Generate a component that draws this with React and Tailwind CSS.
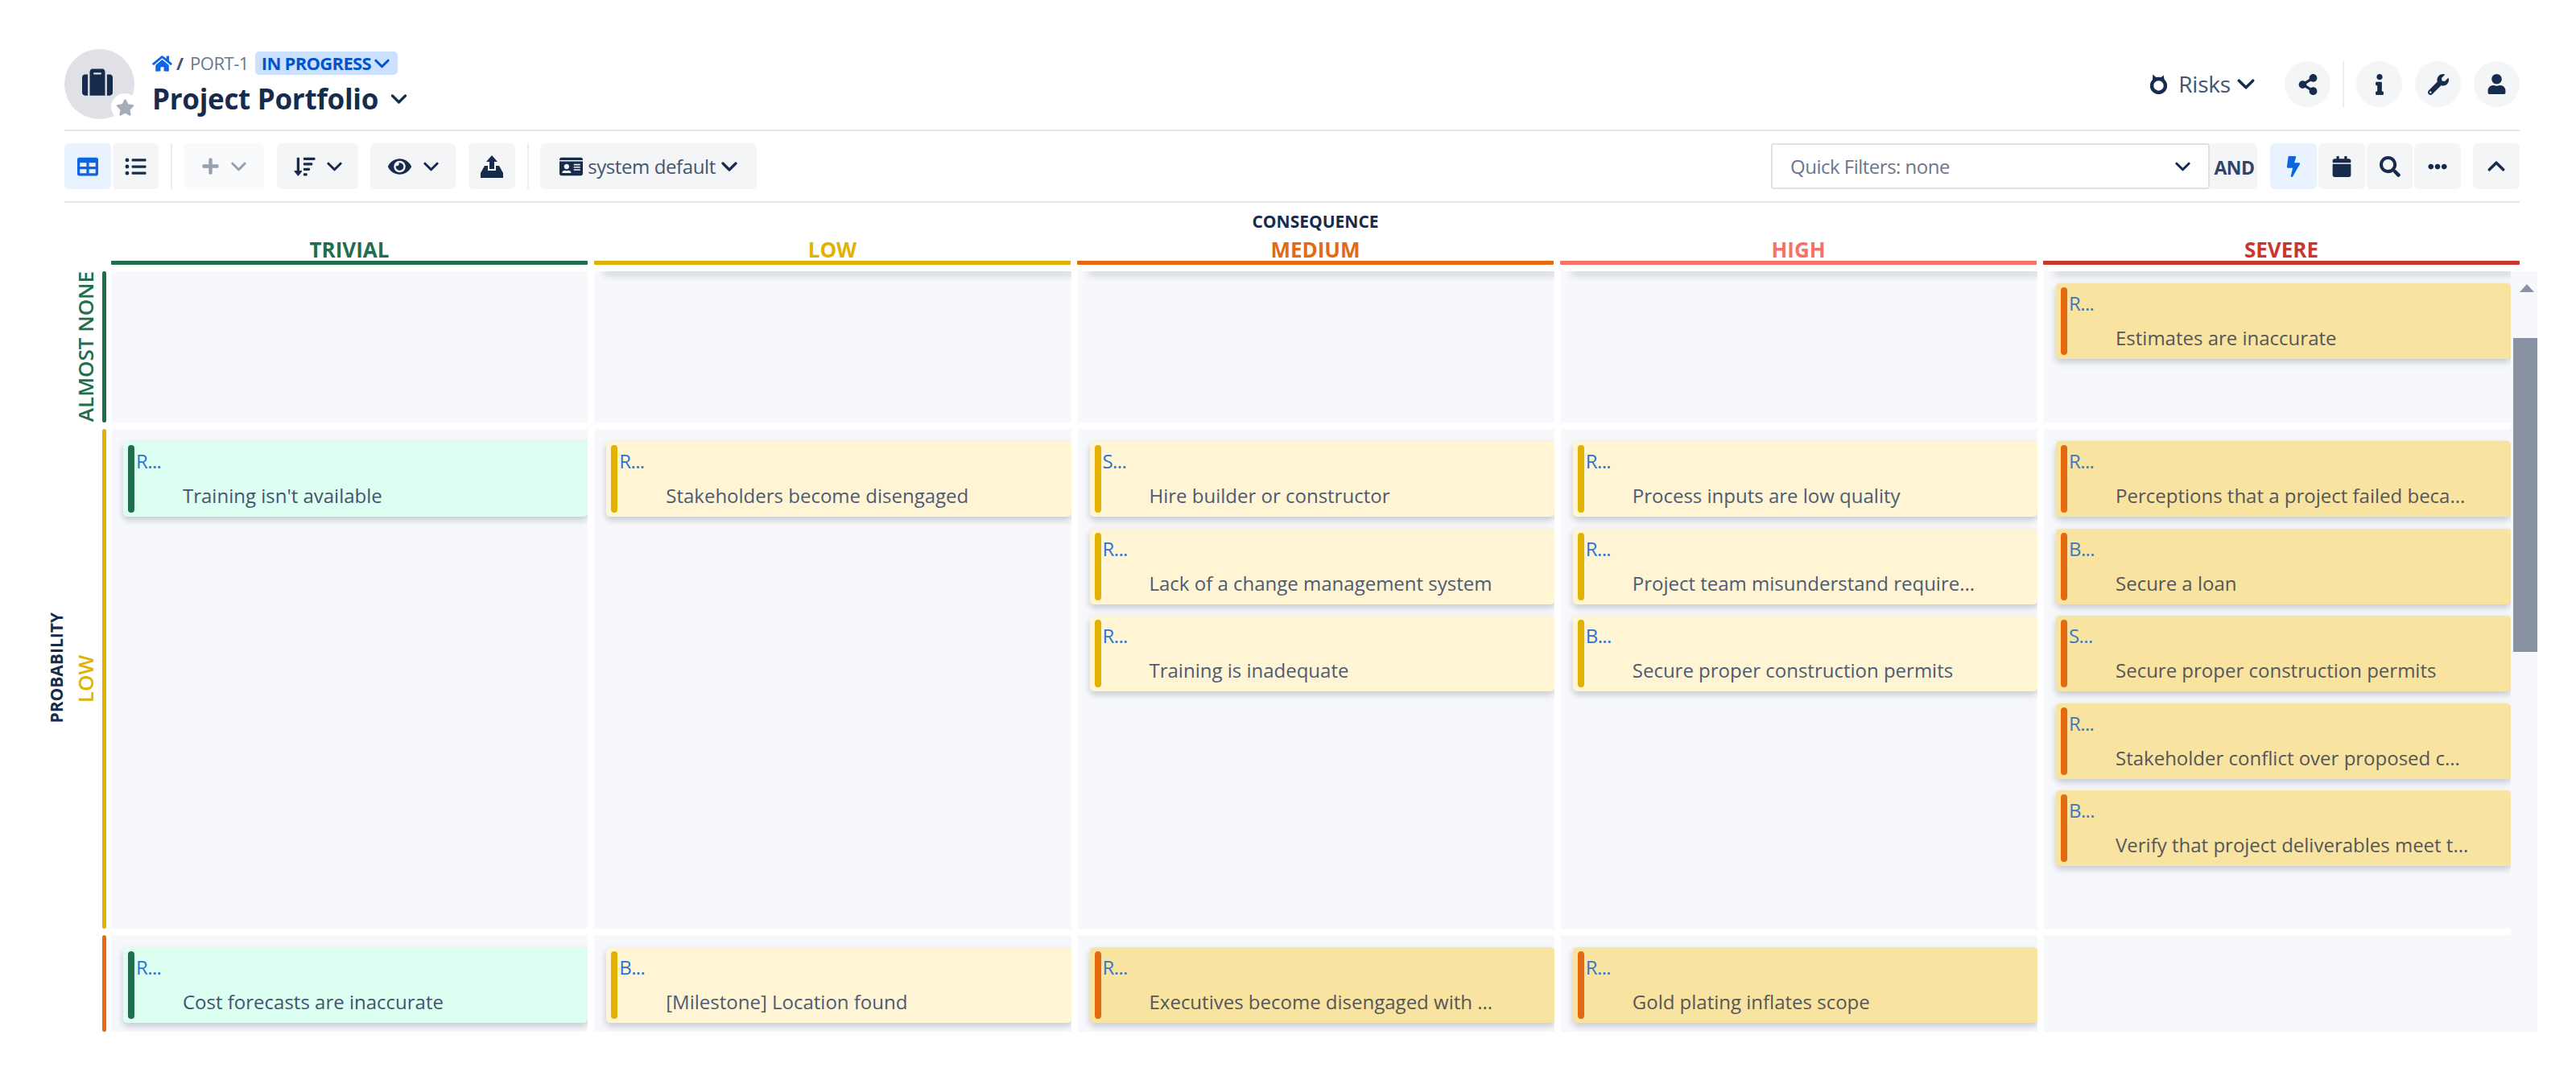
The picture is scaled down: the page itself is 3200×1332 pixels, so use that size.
import React from "react";
import {
  FaHome, FaSuitcase, FaStar, FaTable, FaListUl, FaPlus, FaSortAmountDown, FaEye,
  FaIdCard, FaShareAlt, FaInfo, FaWrench, FaUser, FaBolt, FaCalendar, FaSearch, FaEllipsisH,
} from "react-icons/fa";

const FONT = { fontFamily: '"Open Sans", sans-serif' };

const TONES = {
  green: { card: "bg-[#dcfff1]", bar: "bg-[#216e4e]", id: "text-[#2a74d6]", title: "text-[#44546f]" },
  yellow: { card: "bg-[#fff5d4]", bar: "bg-[#e2b203]", id: "text-[#2a74d6]", title: "text-[#4d5b73]" },
  orange: { card: "bg-[#f8e3a0]", bar: "bg-[#e56910]", id: "text-[#3b78c4]", title: "text-[#55575a]" },
};

const COLUMNS = [
  { label: "TRIVIAL", text: "text-[#216e4e]", line: "bg-[#216e4e]" },
  { label: "LOW", text: "text-[#e2b203]", line: "bg-[#e2b203]" },
  { label: "MEDIUM", text: "text-[#e56910]", line: "bg-[#e56910]" },
  { label: "HIGH", text: "text-[#f87168]", line: "bg-[#f87168]" },
  { label: "SEVERE", text: "text-[#c9372c]", line: "bg-[#c9372c]" },
];

const ROWS = [
  {
    label: "ALMOST NONE",
    text: "text-[#216e4e]",
    line: "bg-[#216e4e]",
    height: "h-[188px]",
    cells: [
      { cards: [] },
      { clipped: true, cards: [] },
      { clipped: true, cards: [] },
      { clipped: true, cards: [] },
      { clipped: true, cards: [{ id: "R...", title: "Estimates are inaccurate", tone: "orange" }] },
    ],
  },
  {
    label: "LOW",
    text: "text-[#e2b203]",
    line: "bg-[#e2b203]",
    height: "h-[621px]",
    cells: [
      { cards: [{ id: "R...", title: "Training isn't available", tone: "green" }] },
      { cards: [{ id: "R...", title: "Stakeholders become disengaged", tone: "yellow" }] },
      {
        cards: [
          { id: "S...", title: "Hire builder or constructor", tone: "yellow" },
          { id: "R...", title: "Lack of a change management system", tone: "yellow" },
          { id: "R...", title: "Training is inadequate", tone: "yellow" },
        ],
      },
      {
        cards: [
          { id: "R...", title: "Process inputs are low quality", tone: "yellow" },
          { id: "R...", title: "Project team misunderstand require...", tone: "yellow" },
          { id: "B...", title: "Secure proper construction permits", tone: "yellow" },
        ],
      },
      {
        cards: [
          { id: "R...", title: "Perceptions that a project failed beca...", tone: "orange" },
          { id: "B...", title: "Secure a loan", tone: "orange" },
          { id: "S...", title: "Secure proper construction permits", tone: "orange" },
          { id: "R...", title: "Stakeholder conflict over proposed c...", tone: "orange" },
          { id: "B...", title: "Verify that project deliverables meet t...", tone: "orange" },
        ],
      },
    ],
  },
  {
    label: "",
    text: "text-[#e56910]",
    line: "bg-[#e56910]",
    height: "h-[120px]",
    cells: [
      { cards: [{ id: "R...", title: "Cost forecasts are inaccurate", tone: "green" }] },
      { cards: [{ id: "B...", title: "[Milestone] Location found", tone: "yellow" }] },
      { cards: [{ id: "R...", title: "Executives become disengaged with ...", tone: "orange" }] },
      { cards: [{ id: "R...", title: "Gold plating inflates scope", tone: "orange" }] },
      { cards: [] },
    ],
  },
];

function Chevron({ className = "", up = false }) {
  return (
    <svg viewBox="0 0 20 12" className={`shrink-0 ${className}`} fill="none">
      <path
        d={up ? "M2 10 L10 2 L18 10" : "M2 2 L10 10 L18 2"}
        stroke="currentColor"
        strokeWidth="3.2"
        strokeLinecap="round"
        strokeLinejoin="round"
      />
    </svg>
  );
}

function ToolButton({ className = "", children }) {
  return (
    <div className={`flex h-[57px] items-center justify-center rounded-[6px] bg-[#f4f5f7] text-[#172b4d] ${className}`}>
      {children}
    </div>
  );
}

function RoundButton({ children }) {
  return (
    <div className="flex h-[57px] w-[57px] items-center justify-center rounded-full bg-[#f4f5f7] text-[#172b4d]">
      {children}
    </div>
  );
}

function UploadIcon() {
  return (
    <svg viewBox="0 0 30 30" className="h-[30px] w-[30px]" fill="#172b4d">
      <path d="M15 1 L22 9 H18 V18 H12 V9 H8 Z" />
      <path d="M6 14 H10 V20 H20 V14 H24 L29 23 V29 H1 V23 Z" />
    </svg>
  );
}

function RiskIcon() {
  return (
    <svg viewBox="0 0 24 28" className="h-[27px] w-[23px] shrink-0" fill="none">
      <circle cx="12" cy="16" r="8.8" stroke="#172b4d" strokeWidth="4.6" />
      <path d="M4 13 L4.5 1.5 L11 7 Z M13 7 L18.5 2.5 L20 13 Z" fill="#172b4d" />
    </svg>
  );
}

function RiskCard({ card }) {
  const tone = TONES[card.tone];
  return (
    <div className={`flex h-[94px] shrink-0 rounded-[5px] shadow-[0_4px_8px_rgba(9,30,66,0.22)] ${tone.card}`}>
      <div className={`my-[5px] ml-[6px] w-[8px] shrink-0 rounded-full ${tone.bar}`} />
      <div className="min-w-0 flex-1 pl-[2px] pt-[9px]">
        <div className={`h-[32px] text-[24px] leading-[32px] tracking-[-0.6px] ${tone.id}`}>{card.id}</div>
        <div className={`mt-[11px] h-[32px] whitespace-nowrap pl-[58px] text-[24px] leading-[32px] ${tone.title}`}>
          {card.title}
        </div>
      </div>
    </div>
  );
}

function Cell({ cell }) {
  return (
    <div className="flex h-full min-w-0 flex-col gap-[14.5px] overflow-hidden bg-[#f7f8fb] pl-[15px] pt-[15px]">
      {cell.clipped && (
        <div className="-mt-[15px] mb-[0.5px] h-0 shrink-0 shadow-[0_2px_8px_3px_rgba(9,30,66,0.2)]" />
      )}
      {cell.cards.map((card, i) => (
        <RiskCard key={i} card={card} />
      ))}
    </div>
  );
}

function Header() {
  return (
    <div className="flex h-[87px] items-start">
      <div className="relative flex h-[87px] w-[87px] items-center justify-center rounded-full bg-[#dfe1e6] text-[#172b4d]">
        <FaSuitcase className="mb-[6px] mr-[6px] h-[38px] w-[38px]" />
        <div className="absolute -bottom-[2px] -right-[5px] flex h-[34px] w-[34px] items-center justify-center rounded-full bg-white">
          <FaStar className="h-[23px] w-[23px] text-[#a5adba]" />
        </div>
      </div>
      <div className="ml-[22px] flex flex-col">
        <div className="mt-[3px] flex h-[29px] items-center text-[22px]">
          <FaHome className="h-[22px] w-[25px] text-[#0c66e4]" />
          <span className="ml-[5px] font-bold text-[#44546f]">/</span>
          <span className="ml-[8px] tracking-[-0.5px] text-[#6b778c]">PORT-1</span>
          <div className="ml-[8px] flex h-[29px] w-[177px] items-center rounded-[5px] bg-[#cce0ff] pl-[8px] font-bold tracking-[-0.7px] text-[#0055cc]">
            IN PROGRESS
            <Chevron className="ml-[4px] h-[12px] w-[19px]" />
          </div>
        </div>
        <div className="mt-[5px] flex h-[50px] items-center">
          <span className="text-[35px] font-bold leading-[50px] tracking-[-0.3px] text-[#172b4d]">Project Portfolio</span>
          <Chevron className="ml-[15px] h-[12px] w-[21px] text-[#172b4d]" />
        </div>
      </div>
      <div className="ml-auto mt-[15px] flex items-center">
        <RiskIcon />
        <span className="ml-[13px] text-[28px] leading-[57px] tracking-[-0.2px] text-[#44546f]">Risks</span>
        <Chevron className="ml-[8px] h-[13px] w-[22px] text-[#172b4d]" />
        <div className="ml-[37px]"><RoundButton><FaShareAlt className="h-[26px] w-[26px]" /></RoundButton></div>
        <div className="mx-[15px] h-[57px] w-[2px] bg-[#ebecf0]" />
        <RoundButton><FaInfo className="h-[26px] w-[26px]" /></RoundButton>
        <div className="ml-[16px]"><RoundButton><FaWrench className="h-[26px] w-[26px]" /></RoundButton></div>
        <div className="ml-[16px]"><RoundButton><FaUser className="h-[25px] w-[25px]" /></RoundButton></div>
      </div>
    </div>
  );
}

function Toolbar() {
  return (
    <div className="mt-[15px] flex h-[57px] items-center">
      <ToolButton className="w-[58px] !bg-[#e9f2ff] !text-[#0c66e4]"><FaTable className="h-[26px] w-[26px]" /></ToolButton>
      <ToolButton className="ml-[2px] w-[57px]"><FaListUl className="h-[26px] w-[27px]" /></ToolButton>
      <div className="ml-[15px] mr-[14px] h-[57px] w-[2px] bg-[#ebecf0]" />
      <ToolButton className="w-[100px] gap-[14px] !bg-[#f9fafb] !text-[#97a0af]">
        <FaPlus className="h-[23px] w-[23px]" />
        <Chevron className="h-[12px] w-[19px]" />
      </ToolButton>
      <ToolButton className="ml-[16px] w-[101px] gap-[14px]">
        <FaSortAmountDown className="h-[26px] w-[27px]" />
        <Chevron className="h-[12px] w-[19px]" />
      </ToolButton>
      <ToolButton className="ml-[15px] w-[106px] gap-[15px]">
        <FaEye className="h-[26px] w-[29px]" />
        <Chevron className="h-[12px] w-[19px]" />
      </ToolButton>
      <ToolButton className="ml-[16px] w-[58px]"><UploadIcon /></ToolButton>
      <div className="ml-[15px] mr-[14px] h-[57px] w-[2px] bg-[#ebecf0]" />
      <ToolButton className="w-[269px]">
        <FaIdCard className="h-[28px] w-[29px]" />
        <span className="ml-[6px] text-[24px] tracking-[-0.4px] text-[#44546f]">system default</span>
        <Chevron className="ml-[7px] h-[12px] w-[20px]" />
      </ToolButton>
      <div className="ml-auto flex h-[57px] w-[545px] items-center rounded-[3px] border-2 border-[#dfe1e6] bg-white pl-[22px] pr-[22px] text-[24px] tracking-[-0.5px] text-[#6b778c]">
        Quick Filters: none
        <Chevron className="ml-auto h-[12px] w-[19px] text-[#172b4d]" />
      </div>
      <ToolButton className="w-[59px] rounded-l-none pl-[2px] pt-[3px] text-[23px] font-bold tracking-[-0.5px] !text-[#344563]">AND</ToolButton>
      <ToolButton className="ml-[16px] w-[58px] !bg-[#e9f2ff] !text-[#0c66e4]"><FaBolt className="h-[26px] w-[26px]" /></ToolButton>
      <ToolButton className="ml-[2px] w-[58px]"><FaCalendar className="h-[26px] w-[26px]" /></ToolButton>
      <ToolButton className="ml-[2px] w-[57px]"><FaSearch className="h-[26px] w-[26px]" /></ToolButton>
      <ToolButton className="ml-[2px] w-[58px]"><FaEllipsisH className="h-[24px] w-[24px]" /></ToolButton>
      <ToolButton className="ml-[15px] w-[58px]"><Chevron up className="h-[13px] w-[22px]" /></ToolButton>
    </div>
  );
}

function Matrix() {
  return (
    <div className="-ml-[80px] flex w-[3152px]">
      <div className="flex h-[946px] w-[88px] shrink-0 items-center justify-end pr-[7px] pt-[40px]">
        <span className="rotate-180 text-[21px] font-bold leading-[22px] text-[#172b4d] [writing-mode:vertical-rl]">
          PROBABILITY
        </span>
      </div>
      <div className="flex h-[946px] w-[3031px] shrink-0 flex-col gap-[8px] overflow-hidden">
        {ROWS.map((row, r) => (
          <div key={r} className={`flex shrink-0 ${row.height}`}>
            <div className="flex h-full w-[39px] shrink-0 items-center justify-center pr-[4px]">
              <span className={`rotate-180 whitespace-nowrap text-[26px] font-semibold leading-[26px] ${row.text} [writing-mode:vertical-rl]`}>
                {row.label}
              </span>
            </div>
            <div className={`h-full w-[4.5px] shrink-0 rounded-full ${row.line}`} />
            <div className="ml-[6.5px] grid w-[2981px] grid-cols-[repeat(4,592.25px)_580px] gap-x-[8px]">
              {row.cells.map((cell, c) => (
                <Cell key={c} cell={cell} />
              ))}
            </div>
          </div>
        ))}
      </div>
      <div className="flex h-[946px] w-[33px] shrink-0 flex-col items-end bg-[#f7f8fb]">
        <div className="h-[83px] w-full pl-[11px] pt-[16px]">
          <div className="h-0 w-0 border-x-[9px] border-b-[10px] border-x-transparent border-b-[#8993a4]" />
        </div>
        <div className="h-[390px] w-[30px] bg-[#8993a4]" />
      </div>
    </div>
  );
}

export default function App() {
  return (
    <div className="h-[1332px] w-[3200px] overflow-hidden bg-white pl-[80px] pr-[70px] pt-[61px]" style={FONT}>
      <Header />
      <div className="mt-[13px] h-[2px] bg-[#e4e6ea]" />
      <Toolbar />
      <div className="mt-[15px] h-[2px] bg-[#e4e6ea]" />
      <div className="ml-[58px] h-[74px] w-[2992px] pt-[12px]">
        <div className="text-center text-[21px] font-bold leading-[22px] text-[#172b4d]">CONSEQUENCE</div>
      </div>
      <div className="-mt-[32px] ml-[58px] grid w-[2992px] grid-cols-5 gap-x-[8px]">
        {COLUMNS.map((col) => (
          <div key={col.label} className="flex flex-col items-center">
            <div className={`h-[30px] pt-[1px] text-[26px] font-bold leading-[30px] ${col.text}`}>{col.label}</div>
            <div className={`h-[5px] w-full rounded-[1px] ${col.line}`} />
          </div>
        ))}
      </div>
      <div className="mt-[8px]">
        <Matrix />
      </div>
    </div>
  );
}
